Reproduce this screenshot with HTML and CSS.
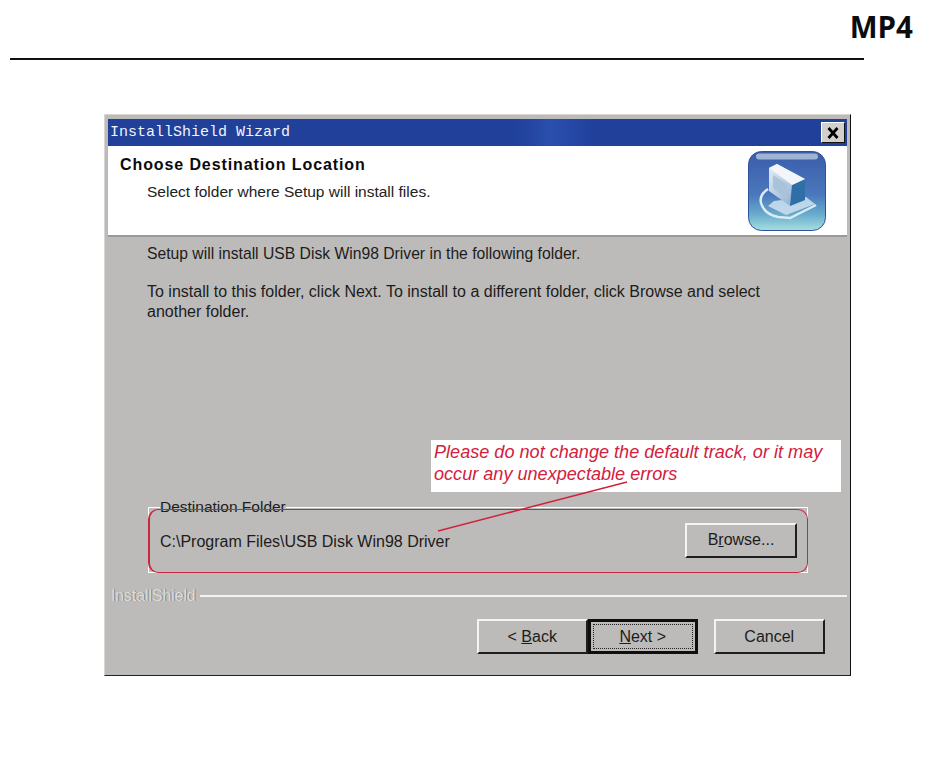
FILE: index.html
```html
<!DOCTYPE html>
<html lang="en">
<head>
<meta charset="utf-8">
<title>InstallShield Wizard</title>
<link rel="stylesheet" href="styles.css">
</head>
<body>
<header class="doc-head">
  <div class="doc-tag">MP4</div>
  <div class="doc-rule"></div>
</header>
<main class="dialog">
  <div class="titlebar">
    <span class="title-text">InstallShield Wizard</span>
    <span class="close-btn">
      <svg width="16" height="14" viewBox="0 0 16 14"><path d="M3.5 2l9 10M12.5 2l-9 10" stroke="#000" stroke-width="2.8" fill="none"/></svg>
    </span>
  </div>
  <div class="banner">
    <div class="banner-text">
      <div class="banner-title">Choose Destination Location</div>
      <div class="banner-sub">Select folder where Setup will install files.</div>
    </div>
    <svg class="banner-icon" width="78" height="80" viewBox="0 0 78 80">
      <defs>
        <linearGradient id="tile" x1="0" y1="0" x2="0" y2="1">
          <stop offset="0" stop-color="#3a5cab"/>
          <stop offset=".55" stop-color="#4a78bb"/>
          <stop offset=".8" stop-color="#6aaccd"/>
          <stop offset="1" stop-color="#a5e0de"/>
        </linearGradient>
        <linearGradient id="screen" x1="0" y1="0" x2="1" y2="1">
          <stop offset="0" stop-color="#e8eef6"/>
          <stop offset="1" stop-color="#7fa3cf"/>
        </linearGradient>
      </defs>
      <rect x="0.5" y="0.5" width="77" height="79" rx="13" fill="url(#tile)" stroke="#2f4f9a"/>
      <rect x="8" y="2.5" width="62" height="6" rx="3" fill="#9fb4d4"/>
      <path d="M20 38q-9 6-7 14 3 11 17 14l12 1 26-13" fill="none" stroke="#dceaf2" stroke-width="2.5"/>
      <path d="M26 50l-6 5 18 9 29-11-9-7z" fill="#cfe2ee" opacity=".85"/>
      <path d="M21 17l8-4 28 15v21l-15 6-21-15z" fill="url(#screen)"/>
      <path d="M44 34l13-6v21l-15 6z" fill="#2f6fa8"/>
      <path d="M21 17l8-4 28 15-13 6z" fill="#f2f6fa"/>
      <path d="M25 24l14 9v15l-14-11z" fill="#a9c4d8"/>
    </svg>
  </div>
  <div class="content">
    <p class="line">Setup will install USB Disk Win98 Driver in the following folder.</p>
    <p class="para">To install to this folder, click Next. To install to a different folder, click Browse and select another folder.</p>
    <fieldset class="dest">
      <legend class="dest-legend">Destination Folder</legend>
      <div class="dest-row">
        <span class="dest-path">C:\Program Files\USB Disk Win98 Driver</span>
        <button class="btn" type="button"><span>B<u>r</u>owse...</span></button>
      </div>
    </fieldset>
    <div class="brand-row">
      <span class="brand">InstallShield</span>
      <span class="brand-line"></span>
    </div>
    <div class="actions">
      <button class="btn" type="button"><span>&lt; <u>B</u>ack</span></button>
      <button class="btn btn-default" type="button"><span class="focus"><span><u>N</u>ext &gt;</span></span></button>
      <button class="btn btn-cancel" type="button">Cancel</button>
    </div>
  </div>
  <div class="note">Please do not change the default track, or it may<br>occur any unexpectable errors</div>
  <div class="ring"></div>
  <svg class="pointer" width="200" height="55" viewBox="0 0 200 55"><path d="M2 51L191 2" stroke="#d3203c" stroke-width="1.5" fill="none"/></svg>
</main>
</body>
</html>
```
FILE: styles.css
```css
* { box-sizing: border-box; }
html, body { margin: 0; padding: 0; background: #fff; }
body { width: 950px; height: 760px; overflow: hidden; font-family: "Liberation Sans", Arial, sans-serif; color: #111; }

.doc-head { padding: 13px 37px 0 10px; display: flex; flex-direction: column; }
.doc-tag { align-self: flex-end; font-family: "Open Sans", sans-serif; font-weight: 700; font-size: 29.5px; line-height: 28px; height: 45px; color: #0c0c0c; }
.doc-rule { width: 854px; height: 2px; background: #111; }

.dialog { position: relative; width: 747px; height: 562px; margin: 54px 0 0 104px; padding: 4px 3px 0 3px; background: #bcbbb9; border-top: 1px solid #d8d6d2; border-left: 1px solid #d8d6d2; border-right: 1px solid #111; border-bottom: 1px solid #222; }

.titlebar { height: 27px; background: linear-gradient(90deg, #20409a 0 55%, #2a4fae 60%, #20409a 66% 100%); display: flex; align-items: center; justify-content: space-between; padding: 0 2px 0 2px; }
.title-text { font-family: "Liberation Mono", monospace; font-size: 15px; color: #f2f4f8; }
.close-btn { width: 24px; height: 21px; background: #d2d0cc; border: 1px solid; border-color: #fff #111 #111 #fff; display: flex; align-items: center; justify-content: center; }

.banner { height: 91px; background: #fff; border-bottom: 2px solid #999; display: flex; justify-content: space-between; padding: 5px 21px 0 12px; }
.banner-title { font-weight: 700; font-size: 16px; line-height: 20px; margin-top: 4px; letter-spacing: .9px; color: #0b0b0b; }
.banner-sub { font-size: 15.5px; line-height: 20px; margin: 7px 0 0 27px; color: #222; }

.content { padding: 7px 0 0 39px; font-size: 16px; line-height: 20px; color: #1c1c1c; }
.line { margin: 0; font-size: 15.7px; }
.para { margin: 18px 0 0; width: 640px; }

.dest { margin: 177px 0 0 1px; padding: 0; width: 660px; height: 74px; border: 1px solid #fff; }
.dest-legend { padding: 0; margin-left: 11px; line-height: 16px; font-size: 15.5px; }
.dest-row { display: flex; justify-content: space-between; align-items: center; padding: 0 10px 0 11px; height: 34px; margin-top: 8px; }
.dest-path { margin-top: 3px; }

.btn { width: 112px; height: 35px; padding: 0; font: inherit; color: #1c1c1c; background: #bcbbb9; border: 2px solid; border-color: #f4f4f2 #1e1e1e #1e1e1e #f4f4f2; display: inline-flex; align-items: center; justify-content: center; }

.brand-row { display: flex; align-items: center; gap: 4px; margin: 13px 0 0 -39px; height: 20px; }
.brand { color: #dedcd8; font-size: 15.7px; text-shadow: 1px 0 0 #888; padding-left: 3px; }
.brand-line { flex: 1; height: 2px; background: #f2f2f0; }

.actions { display: flex; margin: 13px 0 0 330px; }
.actions .btn { width: 110.5px; }
.actions .btn-default { border: 3px solid #0e0e0e; padding: 2px; }
.focus { width: 100%; height: 100%; border: 1px dotted #222; display: flex; align-items: center; justify-content: center; }
.actions .btn-cancel { margin-left: 16px; }

.note { position: absolute; left: 326px; top: 325px; width: 410px; height: 52px; padding: 1px 0 0 3px; background: #fff; color: #d3203c; font-style: italic; font-size: 18.1px; line-height: 22px; }
.ring { position: absolute; left: 43px; top: 394px; width: 660px; height: 64px; border: 1px solid #c8283f; border-left-width: 2px; border-radius: 10px; }
.pointer { position: absolute; left: 331px; top: 365px; }
```
